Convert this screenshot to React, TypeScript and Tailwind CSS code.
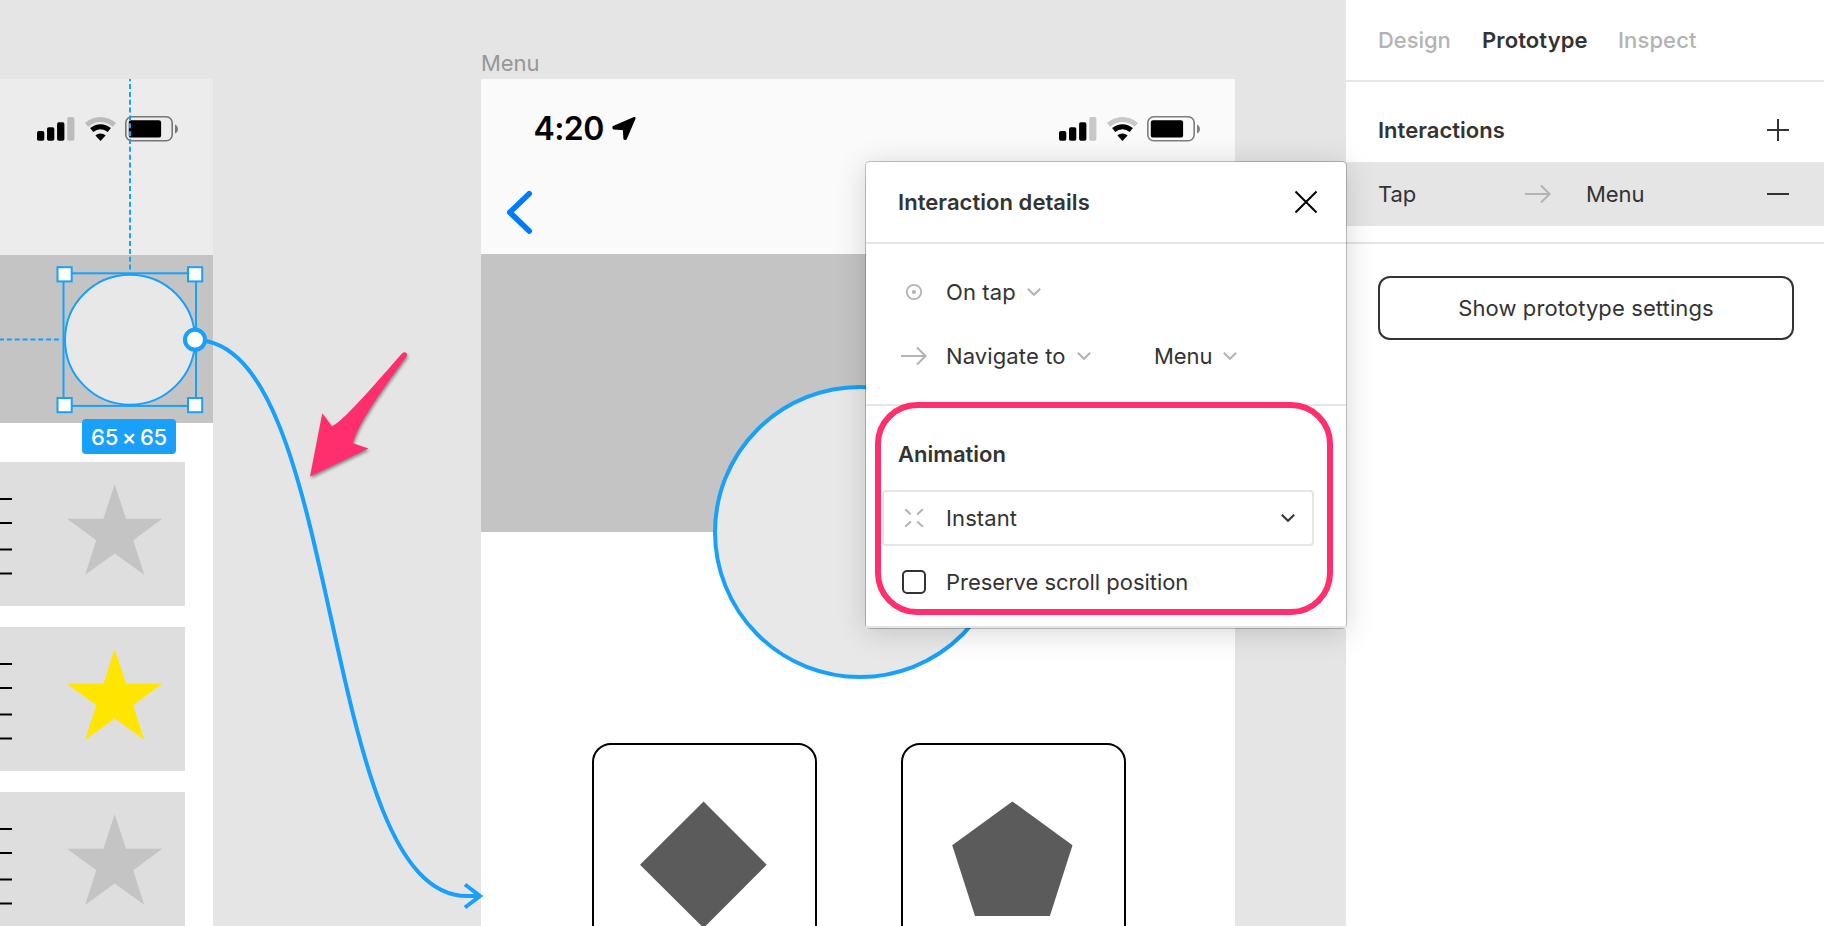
import React from "react";

const BLUE = "#18a0fb";

function StatusIcons() {
  return (
    <svg width="142" height="27" viewBox="0 0 142 27" className="block shrink-0">
      <rect x="0" y="15" width="7.3" height="9.8" rx="1.8" />
      <rect x="10" y="11.3" width="7.3" height="13.5" rx="1.8" />
      <rect x="20.1" y="6.2" width="7.3" height="18.6" rx="1.8" />
      <rect x="30.2" y="1" width="7.2" height="23.8" rx="1.8" opacity="0.2" />
      <path d="M49.6 8.8 C57.8 1.6 69.2 1.6 77.4 8.8" fill="none" stroke="#000" strokeWidth="5" opacity="0.2" />
      <path d="M54.7 14 C60 9.6 67 9.6 72.3 14" fill="none" stroke="#000" strokeWidth="5" />
      <path d="M63.5 25 L58.4 19.4 C61.2 16.7 65.8 16.7 68.6 19.4 Z" />
      <rect x="88.8" y="0.8" width="46.4" height="24" rx="6" fill="none" stroke="#000" strokeWidth="1.6" opacity="0.5" />
      <rect x="91.8" y="4.2" width="32.3" height="17.4" rx="2.2" />
      <path d="M138 8.4 C141.9 10.2 141.9 15.6 138 17.6 Z" opacity="0.5" />
    </svg>
  );
}

function ListCard({ color }: { color: string }) {
  return (
    <div className="h-[144.5px] w-[185px] shrink-0 bg-[#dedede]">
      <svg width="185" height="144" viewBox="0 0 185 144" className="block">
        <path d="M0 37H12M0 61H12M0 87.4H12M0 111.5H12" stroke="#000" strokeWidth="2" />
        <path
          d="M114.7 22.3L126 56.8H162.2L133.2 78.2L144.2 112.8L114.7 91.6L85.2 112.8L96.3 78.2L67 56.8H103.4Z"
          fill={color}
        />
      </svg>
    </div>
  );
}

function LongArrow() {
  return (
    <svg width="26" height="20" viewBox="0 0 26 20" fill="none" stroke="#b3b3b3" strokeWidth="2" className="block shrink-0">
      <path d="M0 10H25M16 1.5L24.6 10L16 18.5" />
    </svg>
  );
}

function Chevron({ color }: { color: string }) {
  return (
    <svg width="14" height="10" viewBox="0 0 14 10" fill="none" stroke={color} strokeWidth="2" className="block shrink-0">
      <path d="M0.8 1.8L7 7.8L13.2 1.8" />
    </svg>
  );
}

function Canvas() {
  return (
    <main className="relative h-full w-[1346px] shrink-0 overflow-hidden bg-[#e5e5e5]">
      <section className="absolute left-0 top-[79px] h-[847px] w-[213px] overflow-hidden bg-white">
        <div className="h-[176px] bg-[#ececec] pl-[37px] pt-[37px]">
          <StatusIcons />
        </div>
        <div className="h-[168px] bg-[#c4c4c4]" />
        <div className="flex flex-col gap-[20.5px] pt-[38.5px]">
          <ListCard color="#c4c4c4" />
          <ListCard color="#ffe600" />
          <ListCard color="#c4c4c4" />
        </div>
      </section>

      <div className="absolute left-[481px] top-[48px] text-[22px] leading-[30px] tracking-[-0.1px] text-[#979797]">Menu</div>
      <section className="absolute left-[481px] top-[79px] h-[847px] w-[754px] overflow-hidden bg-white">
        <div className="h-[175px] bg-[#fafafa]">
          <div className="flex items-start justify-between pl-[52.5px] pr-[34px] pt-[29px]">
            <div className="flex items-center pt-px text-[32px] font-semibold leading-[40px] tracking-[-0.6px] text-black">
              4:20
              <svg width="26" height="26" viewBox="0 0 26 26" className="ml-[7px]">
                <path
                  d="M23.4 2.2L2.6 11.2L2.8 12.4L13 13L13.6 22.6L14.6 22.8Z"
                  stroke="#000"
                  strokeWidth="2.4"
                  strokeLinejoin="round"
                />
              </svg>
            </div>
            <div className="pt-2">
              <StatusIcons />
            </div>
          </div>
          <svg width="30" height="44" viewBox="0 0 30 44" className="ml-[24px] mt-[41px] block">
            <path
              d="M24.2 3.7L4.8 22.3L24.2 41"
              fill="none"
              stroke="#007aff"
              strokeWidth="5.6"
              strokeLinecap="round"
              strokeLinejoin="round"
            />
          </svg>
        </div>
        <div className="h-[278px] bg-[#c4c4c4]" />
        <div className="absolute left-[231.5px] top-[306px] size-[294px] rounded-full border-4 border-[#18a0fb] bg-[#e8e8e8]" />
        <div className="flex gap-[84.5px] pl-[110.5px] pt-[211px]">
          <div className="h-[260px] w-[225px] rounded-[19px] border-2 border-black">
            <svg width="221" height="200" viewBox="0 0 221 200" className="block">
              <path d="M109.6 56.5L172.7 119.8L109.6 183L46 119.8Z" fill="#5b5b5b" />
            </svg>
          </div>
          <div className="h-[260px] w-[225px] rounded-[19px] border-2 border-black">
            <svg width="221" height="200" viewBox="0 0 221 200" className="block">
              <path d="M109.4 56.5L169.5 100.3L146.9 171H72L49.2 100.3Z" fill="#5b5b5b" />
            </svg>
          </div>
        </div>
      </section>

      <svg width="500" height="926" viewBox="0 0 500 926" fill="none" className="pointer-events-none absolute left-0 top-0">
        <path d="M130 79V271" stroke={BLUE} strokeWidth="2" strokeDasharray="5 2.85" strokeDashoffset="2.8" />
        <path d="M0 339.5H62" stroke={BLUE} strokeWidth="2" strokeDasharray="5 2.85" strokeDashoffset="1" />
        <circle cx="130" cy="339.7" r="65" fill="#e8e8e8" stroke={BLUE} strokeWidth="2" />
        <rect x="63.5" y="273.3" width="132.5" height="132.6" stroke={BLUE} strokeWidth="2" />
        <g fill="#fff" stroke={BLUE} strokeWidth="2">
          <rect x="57.5" y="267.2" width="14.2" height="14.2" />
          <rect x="188" y="267.2" width="14.2" height="14.2" />
          <rect x="57.5" y="398" width="14.2" height="14.2" />
          <rect x="188" y="398" width="14.2" height="14.2" />
        </g>
        <path d="M195 340C345 340 317 896 467 896H480" stroke={BLUE} strokeWidth="4" />
        <path d="M465 884.5L480 896L465 907.5" stroke={BLUE} strokeWidth="4" />
        <circle cx="195" cy="339.7" r="10" fill="#fff" stroke={BLUE} strokeWidth="4.2" />
        <path
          d="M310 476.5L322.3 413.2L331.8 426.3C342 422 370 390 402.2 353.2C404.6 350.8 408.4 352.8 406.6 356.2C382 390 357 425 353 443.3L368.4 448.5Z"
          fill="#ff2e6d"
          className="drop-shadow-[1px_2px_1.5px_rgba(0,0,0,0.4)]"
        />
      </svg>
      <div className="absolute left-[82px] top-[419px] flex h-[35px] w-[94px] items-center justify-center rounded-[4px] bg-[#18a0fb] text-[22px] font-medium leading-none tracking-[-0.2px] text-white [word-spacing:-2px]">
        65 × 65
      </div>
    </main>
  );
}

function Sidebar() {
  return (
    <aside className="h-full w-[478px] shrink-0 bg-white">
      <nav className="flex h-[82px] items-center border-b-2 border-[#e5e5e5] pl-8 font-medium text-[#b3b3b3]">
        <span className="w-[104px] tracking-[-0.05px]">Design</span>
        <span className="w-[136px] font-semibold text-[#333]">Prototype</span>
        <span>Inspect</span>
      </nav>
      <section className="border-b-2 border-[#e5e5e5] py-4">
        <div className="flex h-16 items-center justify-between pl-8 pr-[35px]">
          <h2 className="font-semibold tracking-[0.02px]">Interactions</h2>
          <svg width="22" height="22" viewBox="0 0 22 22" stroke="#333" strokeWidth="2">
            <path d="M0 11H22M11 0V22" />
          </svg>
        </div>
        <div className="flex h-16 items-center bg-[#e5e5e5] pl-8 pr-[35px]">
          <span className="w-[147px] tracking-[-0.1px]">Tap</span>
          <LongArrow />
          <span className="ml-[35px] flex-1 tracking-[-0.1px]">Menu</span>
          <svg width="22" height="22" viewBox="0 0 22 22" stroke="#333" strokeWidth="2">
            <path d="M0 11H22" />
          </svg>
        </div>
      </section>
      <div className="px-8 pt-8">
        <button className="block h-16 w-[416px] rounded-xl border-2 border-[#333] text-center">Show prototype settings</button>
      </div>
    </aside>
  );
}

function InteractionPanel() {
  return (
    <div className="absolute left-[866px] top-[162px] w-[480px] rounded-[4px] bg-white shadow-[0_0_0_1px_rgba(0,0,0,0.22),0_4px_30px_rgba(0,0,0,0.17)]">
      <header className="flex h-[82px] items-center justify-between border-b-2 border-[#e5e5e5] pl-8 pr-[28px]">
        <h2 className="font-semibold tracking-[0.05px]">Interaction details</h2>
        <svg width="24" height="24" viewBox="0 0 24 24" stroke="#000" strokeWidth="2">
          <path d="M1.5 1.5L22.5 22.5M22.5 1.5L1.5 22.5" />
        </svg>
      </header>
      <section className="border-b-2 border-[#e5e5e5] py-4">
        <div className="flex h-16 items-center">
          <div className="ml-[35px] flex w-[45px]">
            <svg width="26" height="20" viewBox="0 0 26 20" fill="none">
              <circle cx="13" cy="10" r="7.2" stroke="#b3b3b3" strokeWidth="1.8" />
              <circle cx="13" cy="10" r="2.1" fill="#b3b3b3" />
            </svg>
          </div>
          <span className="mr-[12px] w-[69px] whitespace-nowrap">On tap</span>
          <Chevron color="#b3b3b3" />
        </div>
        <div className="flex h-16 items-center">
          <div className="ml-[35px] w-[45px]">
            <LongArrow />
          </div>
          <span className="mr-[12px] w-[119px] whitespace-nowrap">Navigate to</span>
          <Chevron color="#b3b3b3" />
          <span className="ml-[63px] mr-[12px] w-[57px] tracking-[-0.1px]">Menu</span>
          <Chevron color="#b3b3b3" />
        </div>
      </section>
      <section className="border-b-2 border-[#e5e5e5] pb-3 pt-4">
        <h3 className="flex h-16 items-center pl-8 font-semibold tracking-[-0.02px]">Animation</h3>
        <div className="mb-1 ml-4 mt-1 flex h-14 w-[432px] items-center rounded-[4px] border-2 border-[#e5e5e5]">
          <svg width="20" height="20" viewBox="0 0 20 20" fill="none" stroke="#b3b3b3" strokeWidth="2" className="ml-[20px] mr-[22px]">
            <path d="M1.2 1.2L6.8 6.4M18.8 1.2L13.2 6.4M1.2 18.8L6.8 13.6M18.8 18.8L13.2 13.6" />
          </svg>
          <span className="flex-1">Instant</span>
          <div className="mr-[17px]">
            <Chevron color="#333" />
          </div>
        </div>
        <div className="flex h-16 items-center">
          <span className="ml-9 mr-5 size-6 rounded-[5px] border-2 border-[#333]" />
          <span className="tracking-[-0.04px]">Preserve scroll position</span>
        </div>
      </section>
      <div className="absolute left-[9px] top-[240px] h-[213px] w-[458px] rounded-[42px] border-[6px] border-[#ff2e6d]" />
    </div>
  );
}

export default function App() {
  return (
    <div className="relative flex h-[926px] w-[1824px] overflow-hidden bg-white font-['Inter',sans-serif] text-[22px] leading-8 tracking-[0.11px] text-[#333]">
      <Canvas />
      <Sidebar />
      <InteractionPanel />
    </div>
  );
}
